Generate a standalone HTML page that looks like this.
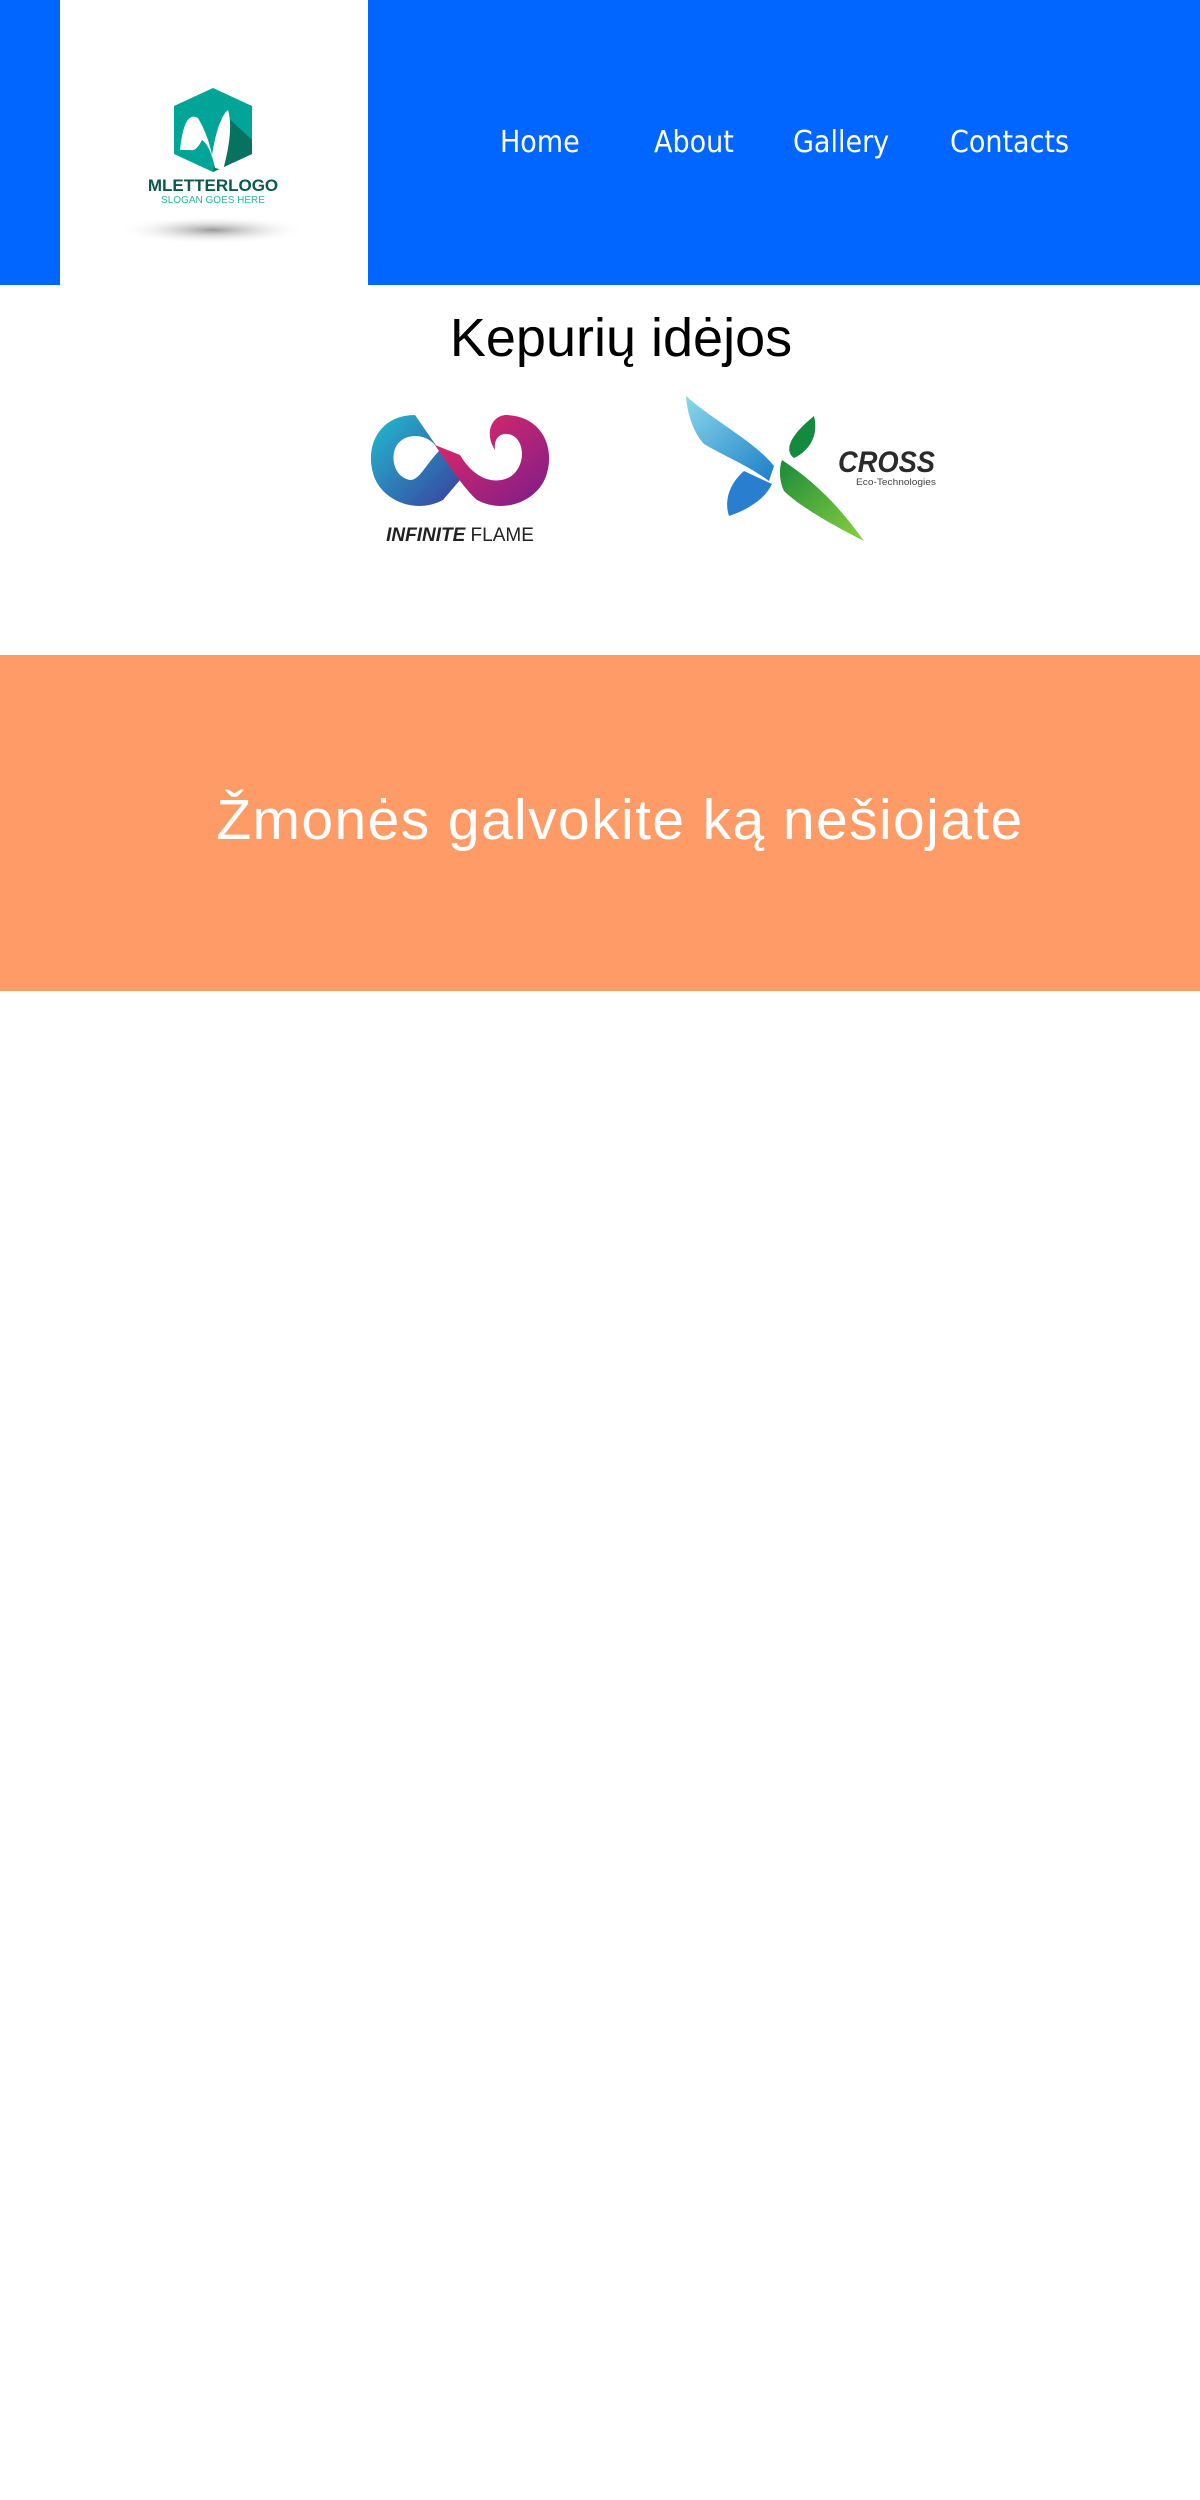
<!DOCTYPE html>
<html><head><meta charset="utf-8"><style>
*{margin:0;padding:0;box-sizing:border-box}
body{width:1200px;height:2500px;background:#fff;position:relative;font-family:"Liberation Sans",sans-serif;overflow:hidden}
.hdr{position:absolute;left:0;top:0;width:1200px;height:285px;background:#0066ff}
.logo{position:absolute;left:60px;top:0;width:308px;height:290px;background:#fff}
.nav{position:absolute;top:121px;color:#fff;font-size:30px;line-height:44px;font-family:"DejaVu Sans Condensed","Liberation Sans Narrow","Liberation Sans",sans-serif}
h1{position:absolute;left:0;width:1242px;text-align:center;top:306px;font-size:54px;font-weight:normal;color:#000;line-height:64px}
.orange{position:absolute;left:0;top:655px;width:1200px;height:336px;background:#ff9b66}
.orange p{position:absolute;left:0;width:1240px;text-align:center;top:130px;font-size:57px;color:#fff;line-height:70px;letter-spacing:1.4px}
</style></head><body>
<div class="hdr"></div>
<div class="logo">
<svg width="308" height="290" viewBox="0 0 308 290">
<defs><radialGradient id="sh" cx="50%" cy="50%" r="50%"><stop offset="0" stop-color="#999"/><stop offset="1" stop-color="#fff" stop-opacity="0"/></radialGradient></defs>
<ellipse cx="153" cy="230" rx="95" ry="14" fill="url(#sh)"/>
<polygon points="153,88 192,106 192,154 153,172 114,154 114,106" fill="#00a597"/>
<polygon points="165,115 192,140 192,154 153,172 160,120" fill="#06725f"/>
<path d="M120,150 Q124,110 138,118 Q148,135 152,155 Q158,118 168,110 Q174,130 163,170 L155,168 Q150,145 142,140 Q136,152 130,150 Z" fill="#fff"/>
<text x="153" y="191" text-anchor="middle" font-family="Liberation Sans Narrow, Liberation Sans" font-weight="bold" font-size="17" fill="#0c5a4c">MLETTERLOGO</text>
<text x="153" y="203" text-anchor="middle" font-family="Liberation Sans Narrow, Liberation Sans" font-size="10" fill="#2bb3a5">SLOGAN GOES HERE</text>
</svg>
</div>
<div class="nav" style="left:500px">Home</div>
<div class="nav" style="left:654px">About</div>
<div class="nav" style="left:793px">Gallery</div>
<div class="nav" style="left:950px">Contacts</div>
<h1>Kepurių idėjos</h1>
<svg style="position:absolute;left:365px;top:405px" width="190" height="145" viewBox="0 0 190 145">
<defs>
<linearGradient id="g1" x1="0" y1="0" x2="1" y2="1"><stop offset="0" stop-color="#21bcd0"/><stop offset="1" stop-color="#3a3f9e"/></linearGradient>
<linearGradient id="g2" x1="0" y1="0" x2="1" y2="1"><stop offset="0" stop-color="#ea2a64"/><stop offset="1" stop-color="#7a1d8a"/></linearGradient>
</defs>
<path d="M50,10 C15,10 0,40 8,68 C15,95 50,110 78,95 L95,75 L75,45 C60,60 55,75 45,75 C28,72 25,50 32,40 C40,28 60,28 70,40 L95,75 Z" fill="url(#g1)"/>
<path d="M140,10 C175,10 190,40 182,68 C175,95 140,110 112,95 C100,85 80,55 70,40 L95,50 C110,75 130,80 145,72 C160,62 160,40 150,32 C140,25 128,30 130,45 C120,30 125,12 140,10 Z" fill="url(#g2)"/>
<text x="95" y="136" text-anchor="middle" font-family="Liberation Sans" font-size="19" fill="#222"><tspan font-weight="bold" font-style="italic">INFINITE</tspan> FLAME</text>
</svg>
<svg style="position:absolute;left:684px;top:396px" width="270" height="145" viewBox="0 0 270 145">
<defs>
<linearGradient id="b1" x1="0" y1="0" x2="1" y2="1"><stop offset="0" stop-color="#8ad8ea"/><stop offset="1" stop-color="#1d7fc8"/></linearGradient>
<linearGradient id="gr1" x1="0" y1="0" x2="1" y2="1"><stop offset="0" stop-color="#1a8a3a"/><stop offset="1" stop-color="#8bd040"/></linearGradient>
</defs>
<path d="M2,0 C30,25 70,45 90,70 L85,85 C65,70 40,60 20,48 C8,35 3,15 2,0 Z" fill="url(#b1)"/>
<path d="M60,75 L88,88 C80,105 60,115 45,120 C40,105 45,88 60,75 Z" fill="#2a7ed0"/>
<path d="M130,20 C135,40 125,55 110,62 C100,55 105,40 130,20 Z" fill="#138a3e"/>
<path d="M98,64 C130,85 155,110 180,145 C150,130 115,110 100,95 C95,85 95,72 98,64 Z" fill="url(#gr1)"/>
<text x="154" y="76" font-family="Liberation Sans" font-weight="bold" font-style="italic" font-size="30" textLength="97" lengthAdjust="spacingAndGlyphs" fill="#2a2a2a">CROSS</text>
<text x="172" y="89" font-family="Liberation Sans" font-size="9" textLength="80" lengthAdjust="spacingAndGlyphs" fill="#444">Eco-Technologies</text>
</svg>
<div class="orange"><p>Žmonės galvokite ką nešiojate</p></div>
</body></html>
